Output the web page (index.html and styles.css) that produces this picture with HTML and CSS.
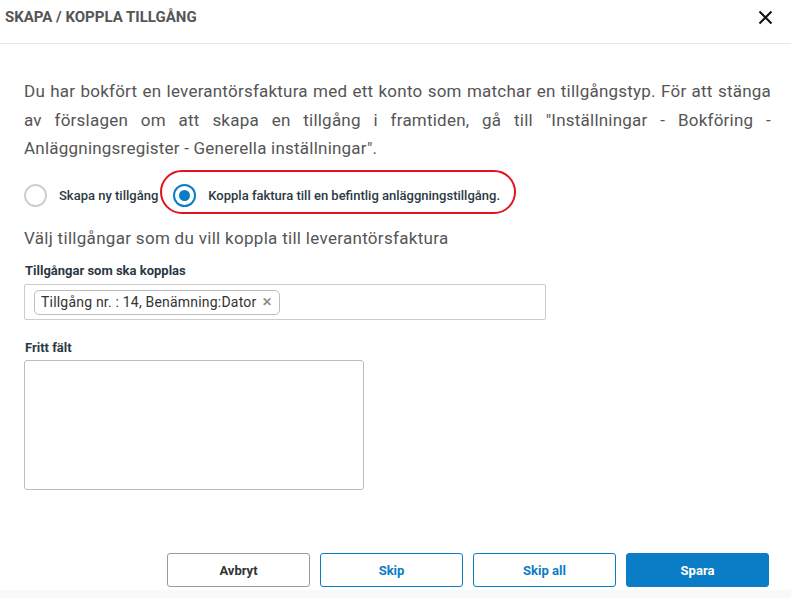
FILE: index.html
```html
<!DOCTYPE html>
<html lang="sv">
<head>
<meta charset="utf-8">
<title>Skapa / Koppla tillgång</title>
<link rel="stylesheet" href="styles.css">
</head>
<body>
<div class="dialog">
  <div class="header">
    <div class="title">SKAPA / KOPPLA TILLGÅNG</div>
    <button class="close" aria-label="Stäng">
      <svg width="15" height="15" viewBox="0 0 15 15"><path d="M1.5 1.5 L13.5 13.5 M13.5 1.5 L1.5 13.5" stroke="#111" stroke-width="2" fill="none"/></svg>
    </button>
  </div>
  <div class="content">
    <p class="intro">Du har bokfört en leverantörsfaktura med ett konto som matchar en tillgångstyp. För att stänga av förslagen om att skapa en tillgång i framtiden, gå till "Inställningar - Bokföring - Anläggningsregister - Generella inställningar".</p>
    <div class="radios">
      <label class="option">
        <span class="radio"></span>
        <span class="opt-label">Skapa ny tillgång</span>
      </label>
      <label class="option option-highlight">
        <span class="radio radio-checked"><span class="dot"></span></span>
        <span class="opt-label">Koppla faktura till en befintlig anläggningstillgång.</span>
      </label>
    </div>
    <div class="subhead">Välj tillgångar som du vill koppla till leverantörsfaktura</div>
    <div class="field-label">Tillgångar som ska kopplas</div>
    <div class="tag-input">
      <span class="chip">Tillgång nr. : 14, Benämning:Dator <span class="chip-x">✕</span></span>
    </div>
    <div class="field-label second">Fritt fält</div>
    <div class="textarea"></div>
  </div>
  <div class="footer">
    <button class="btn btn-default">Avbryt</button>
    <button class="btn btn-outline">Skip</button>
    <button class="btn btn-outline">Skip all</button>
    <button class="btn btn-primary">Spara</button>
  </div>
  <div class="bottom-strip"></div>
</div>
</body>
</html>
```
FILE: styles.css
```css
* { box-sizing: border-box; }
html, body { margin: 0; padding: 0; background: #fff; }
body { font-family: Roboto, "Noto Sans", Arial, sans-serif; color: #555; }

.dialog { width: 791px; height: 598px; display: flex; flex-direction: column; }

.header {
  height: 44px;
  padding: 8px 18px 0 5px;
  display: flex;
  justify-content: space-between;
  align-items: flex-start;
  border-bottom: 1px solid #e9e9e9;
}
.title { font-size: 15px; font-weight: 700; color: #555; line-height: 18px; }
.close { border: 0; background: none; padding: 0; margin-top: 2px; width: 15px; height: 15px; cursor: pointer; }
.close svg { display: block; }

.content { padding: 33px 20px 0 24px; }
.intro {
  margin: 0;
  font-size: 17px;
  line-height: 28.7px;
  letter-spacing: 0.22px;
  text-align: justify;
  color: #555;
}

.radios { display: flex; align-items: center; margin-top: 7px; height: 44px; }
.option { display: flex; align-items: center; gap: 12px; cursor: pointer; }
.option-highlight {
  margin-left: 2px;
  height: 44px;
  padding: 7px 14px 0 11px;
  border: 2px solid #e1111d;
  border-radius: 22px;
}
.radio {
  width: 23px; height: 23px;
  border-radius: 50%;
  border: 2px solid #cfcfcf;
  display: flex; align-items: center; justify-content: center;
  flex: none;
}
.option:first-child { padding-top: 7px; }
.radio-checked { border-color: #0a7dc6; }
.dot { width: 11px; height: 11px; border-radius: 50%; background: #0a7dc6; }
.opt-label { font-size: 13px; font-weight: 500; color: #2b3945; letter-spacing: 0; }

.subhead { margin-top: 14px; font-size: 17px; line-height: 20px; color: #555; letter-spacing: 0.3px; }

.field-label { margin-top: 15px; font-size: 13px; font-weight: 700; color: #2b3945; line-height: 16px; padding-left: 1px; }
.field-label.second { margin-top: 20px; }

.tag-input {
  margin-top: 5px;
  width: 522px;
  height: 36px;
  border: 1px solid #ccc;
  border-radius: 2px;
  padding: 4px 9px;
  display: flex; align-items: center;
}
.chip {
  height: 25px;
  display: inline-flex; align-items: center;
  padding: 0 6px;
  border: 1px solid #bdbdbd;
  border-radius: 5px;
  font-size: 14px;
  color: #333;
  letter-spacing: 0.2px;
}
.chip-x { color: #8e8e8e; font-size: 12px; font-weight: 700; margin-left: 6px; }

.textarea {
  margin-top: 4px;
  width: 340px;
  height: 130px;
  border: 1px solid #bdbdbd;
  border-radius: 3px;
}

.footer {
  margin-top: auto;
  display: flex;
  justify-content: flex-end;
  gap: 10px;
  padding: 0 22px 3px 0;
}
.btn {
  width: 143px;
  height: 34px;
  border-radius: 3px;
  font-family: Roboto, Arial, sans-serif;
  font-size: 13px;
  font-weight: 700;
  background: #fff;
  cursor: pointer;
}
.btn-default { border: 1px solid #9a9a9a; color: #333; }
.btn-outline { border: 1px solid #0a7dc6; color: #0a7dc6; }
.btn-primary { border: 1px solid #0a7dc6; background: #0a7dc6; color: #fff; }

.bottom-strip { height: 8px; background: #f9f9f9; }
```
